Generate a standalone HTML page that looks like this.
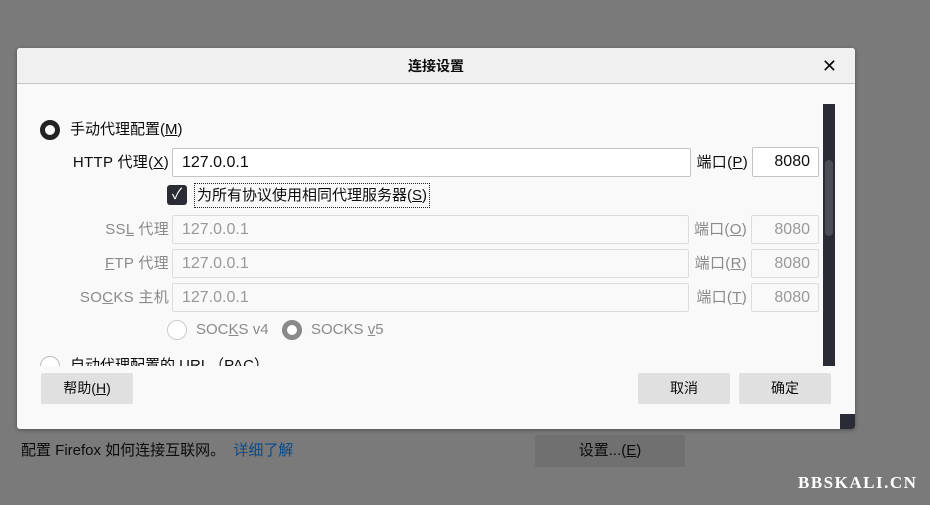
<!DOCTYPE html><html><head><meta charset="utf-8"><style>
*{box-sizing:border-box;margin:0;padding:0}
body{width:930px;height:505px;background:#7a7a7a;font-family:"Liberation Sans","Noto Sans CJK SC",sans-serif;font-size:15px;color:#0c0c0d;position:relative;overflow:hidden}
.a{position:absolute}
.dlg{left:17px;top:48px;width:838px;height:381px;background:#f9f9f9;border-radius:3px;box-shadow:0 1px 4px rgba(0,0,0,.35);overflow:hidden}
.tb{left:0;top:0;width:838px;height:36px;background:#f0f0f0;border-bottom:1px solid #c8c8c8;text-align:center;line-height:36px;font-weight:bold;font-size:14px}
.in{border:1px solid #c4c4c4;background:#fff;border-radius:2px;height:29px;line-height:27px;padding-left:9px;font-size:16px}
.dis{color:#999;background:#f9f9f9;border-color:#ddd}
.lbl{text-align:right;line-height:29px;letter-spacing:.3px}
.g{color:#8a8a8a}
.btn{background:#e0e0e0;border-radius:2px;text-align:center;line-height:31px;height:31px;font-size:14px}
u{text-decoration:underline}
</style></head><body>
<div class="a dlg">
<div class="a tb">连接设置<span class="a" style="right:18px;top:0;font-weight:normal;font-size:18px">✕</span></div>
<div class="a" style="left:0;top:52px;width:838px;height:266px;overflow:hidden">
 <div class="a" style="left:23px;top:20px;width:20px;height:20px;border-radius:50%;border:5px solid #222"></div>
 <div class="a" style="left:53px;top:18px;line-height:24px">手动代理配置(<u>M</u>)</div>
 <div class="a lbl" style="left:0;top:48px;width:152px">HTTP 代理(<u>X</u>)</div>
 <div class="a in" style="left:155px;top:48px;width:519px">127.0.0.1</div>
 <div class="a lbl" style="left:675px;top:48px;width:56px">端口(<u>P</u>)</div>
 <div class="a in" style="left:735px;top:47px;width:67px;text-align:right;padding-right:8px;height:30px;line-height:28px">8080</div>
 <div class="a" style="left:150px;top:85px;width:20px;height:20px;background:#2a2b35;border-radius:3px;color:#fff;font-size:15px;text-align:center;line-height:20px">✓</div>
 <div class="a" style="left:177px;top:83px;height:25px;line-height:23px;border:1px dotted #222;padding:0 2px">为所有协议使用相同代理服务器(<u>S</u>)</div>
 <div class="a lbl g" style="left:0;top:115px;width:152px">SS<u>L</u> 代理</div>
 <div class="a in dis" style="left:155px;top:115px;width:517px">127.0.0.1</div>
 <div class="a lbl g" style="left:672px;top:115px;width:58px">端口(<u>O</u>)</div>
 <div class="a in dis" style="left:734px;top:115px;width:68px;text-align:right;padding-right:8px">8080</div>
 <div class="a lbl g" style="left:0;top:149px;width:152px"><u>F</u>TP 代理</div>
 <div class="a in dis" style="left:155px;top:149px;width:517px">127.0.0.1</div>
 <div class="a lbl g" style="left:672px;top:149px;width:58px">端口(<u>R</u>)</div>
 <div class="a in dis" style="left:734px;top:149px;width:68px;text-align:right;padding-right:8px">8080</div>
 <div class="a lbl g" style="left:0;top:183px;width:152px">SO<u>C</u>KS 主机</div>
 <div class="a in dis" style="left:155px;top:183px;width:517px">127.0.0.1</div>
 <div class="a lbl g" style="left:672px;top:183px;width:58px">端口(<u>T</u>)</div>
 <div class="a in dis" style="left:734px;top:183px;width:68px;text-align:right;padding-right:8px">8080</div>
 <div class="a" style="left:150px;top:220px;width:20px;height:20px;border-radius:50%;border:1px solid #ccc;background:#fff"></div>
 <div class="a g" style="left:179px;top:218px;line-height:24px">SOC<u>K</u>S v4</div>
 <div class="a" style="left:265px;top:220px;width:20px;height:20px;border-radius:50%;border:5px solid #8a8a8a;background:#fff"></div>
 <div class="a g" style="left:294px;top:218px;line-height:24px">SOCKS <u>v</u>5</div>
 <div class="a" style="left:23px;top:256px;width:20px;height:20px;border-radius:50%;border:1px solid #bbb;background:#fff"></div>
 <div class="a" style="left:53px;top:254px;line-height:24px">自动代理配置的 URL（PAC）</div>
 <div class="a" style="left:806px;top:4px;width:12px;height:262px;background:#2a2b35"></div>
 <div class="a" style="left:808px;top:60px;width:8px;height:76px;background:#4b4c56;border-radius:4px"></div>
</div>
<div class="a btn" style="left:24px;top:325px;width:92px">帮助(<u>H</u>)</div>
<div class="a btn" style="left:621px;top:325px;width:92px">取消</div>
<div class="a btn" style="left:722px;top:325px;width:92px">确定</div>
<div class="a" style="left:823px;top:366px;width:15px;height:15px;background:#2a2b35"></div>
</div>
<div class="a" style="left:21px;top:441px;line-height:20px;font-size:15px">配置 Firefox 如何连接互联网。 <span style="color:#0a4a8a;margin-left:4px">详细了解</span></div>
<div class="a" style="left:535px;top:435px;width:150px;height:32px;background:#707070;border-radius:2px;text-align:center;line-height:32px">设置...(<u>E</u>)</div>
<div class="a" style="left:798px;top:473px;color:#fff;font-family:'Liberation Serif',serif;font-weight:bold;font-size:17px;letter-spacing:1.5px">BBSKALI.CN</div>
</body></html>
